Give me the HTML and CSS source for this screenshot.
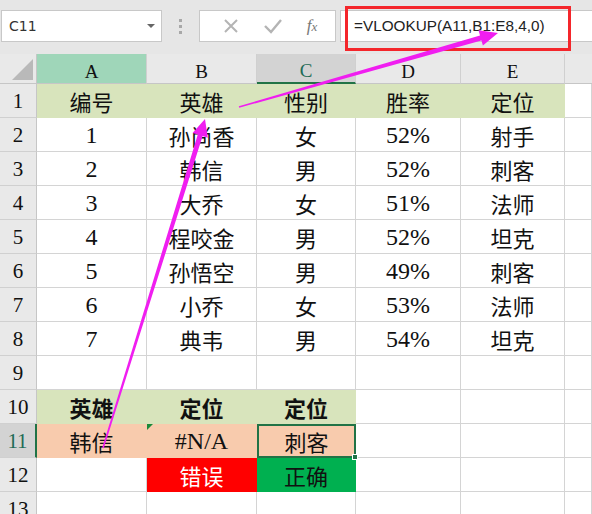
FILE: index.html
```html
<!DOCTYPE html>
<html>
<head>
<meta charset="utf-8">
<link rel="stylesheet" href="styles.css">
</head>
<body>
<div class="toolbar">
  <div class="namebox"><span class="ref">C11</span><span class="caret"></span></div>
  <div class="sep"><i></i><i></i><i></i></div>
  <div class="fbtns">
    <svg class="ico" width="18" height="18" viewBox="0 0 18 18"><path d="M3 3 L15 15 M15 3 L3 15" stroke="#b4b4b4" stroke-width="2" fill="none"/></svg>
    <svg class="ico" width="20" height="18" viewBox="0 0 20 18"><path d="M2 9 L8 15 L18 3" stroke="#b4b4b4" stroke-width="2.4" fill="none"/></svg>
    <span class="fx"><i>f</i><i class="x">x</i></span>
  </div>
  <div class="formula">=VLOOKUP(A11,B1:E8,4,0)</div>
</div>
<div class="sheet">
  <div class="corner"><span class="tri"></span></div>
  <div class="ch sel-a">A</div><div class="ch">B</div><div class="ch sel-c">C</div><div class="ch">D</div><div class="ch">E</div><div class="ch last"></div>

  <div class="rh">1</div><div class="c g">编号</div><div class="c g">英雄</div><div class="c g">性别</div><div class="c g">胜率</div><div class="c g">定位</div><div class="c"></div>
  <div class="rh">2</div><div class="c n">1</div><div class="c">孙尚香</div><div class="c">女</div><div class="c n">52%</div><div class="c">射手</div><div class="c"></div>
  <div class="rh">3</div><div class="c n">2</div><div class="c">韩信</div><div class="c">男</div><div class="c n">52%</div><div class="c">刺客</div><div class="c"></div>
  <div class="rh">4</div><div class="c n">3</div><div class="c">大乔</div><div class="c">女</div><div class="c n">51%</div><div class="c">法师</div><div class="c"></div>
  <div class="rh">5</div><div class="c n">4</div><div class="c">程咬金</div><div class="c">男</div><div class="c n">52%</div><div class="c">坦克</div><div class="c"></div>
  <div class="rh">6</div><div class="c n">5</div><div class="c">孙悟空</div><div class="c">男</div><div class="c n">49%</div><div class="c">刺客</div><div class="c"></div>
  <div class="rh">7</div><div class="c n">6</div><div class="c">小乔</div><div class="c">女</div><div class="c n">53%</div><div class="c">法师</div><div class="c"></div>
  <div class="rh">8</div><div class="c n">7</div><div class="c">典韦</div><div class="c">男</div><div class="c n">54%</div><div class="c">坦克</div><div class="c"></div>
  <div class="rh">9</div><div class="c"></div><div class="c"></div><div class="c"></div><div class="c"></div><div class="c"></div><div class="c"></div>
  <div class="rh">10</div><div class="c g b">英雄</div><div class="c g b">定位</div><div class="c g b">定位</div><div class="c"></div><div class="c"></div><div class="c"></div>
  <div class="rh sel-r">11</div><div class="c o">韩信</div><div class="c o err n">#N/A<span class="flag"></span></div><div class="c o active">刺客<span class="handle"></span></div><div class="c"></div><div class="c"></div><div class="c"></div>
  <div class="rh">12</div><div class="c"></div><div class="c red">错误</div><div class="c grn">正确</div><div class="c"></div><div class="c"></div><div class="c"></div>
  <div class="rh">13</div><div class="c"></div><div class="c"></div><div class="c"></div><div class="c"></div><div class="c"></div><div class="c"></div>
</div>
<div class="redbox"></div>
<svg class="arrows" width="592" height="514" viewBox="0 0 592 514">
  <polygon fill="#f01ef0" points="103.8,448.2 202.6,136.0 207.8,137.7 205,119 192.6,132.9 197.8,134.6 102.2,447.8"/>
  <polygon fill="#f01ef0" points="239.2,107.8 481.4,40.4 482.9,45.6 498,33 478.5,30.3 480.0,35.5 238.8,106.2"/>
</svg>
</body>
</html>
```
FILE: styles.css
```css
* { box-sizing: border-box; }
html, body { margin: 0; padding: 0; }
body {
  width: 592px;
  height: 514px;
  overflow: hidden;
  background: #e6e6e6;
  position: relative;
  font-family: "Liberation Serif", "Noto Sans CJK SC", serif;
}
.toolbar {
  height: 54px;
  display: flex;
  align-items: flex-start;
  padding-top: 10px;
  padding-left: 1px;
  background: #e6e6e6;
}
.namebox {
  width: 161px;
  height: 32px;
  background: #fff;
  border: 1px solid #c8c8c8;
  display: flex;
  align-items: center;
  justify-content: space-between;
  padding: 0 6px 0 7px;
}
.ref {
  font-family: "DejaVu Sans", "Liberation Sans", sans-serif;
  font-size: 14px;
  color: #333;
}
.caret {
  width: 0; height: 0;
  border-left: 4px solid transparent;
  border-right: 4px solid transparent;
  border-top: 4px solid #666;
}
.sep {
  width: 37px;
  height: 32px;
  display: flex;
  flex-direction: column;
  align-items: center;
  justify-content: center;
  gap: 3px;
}
.sep i { display: block; width: 3px; height: 3px; background: #a8a8a8; }
.fbtns {
  width: 137px;
  height: 32px;
  background: #fff;
  border: 1px solid #c8c8c8;
  display: flex;
  align-items: center;
  justify-content: space-around;
  padding: 0 6px 0 10px;
}
.fx {
  font-family: "Liberation Serif", serif;
  font-style: italic;
  color: #777;
  font-size: 17px;
}
.fx i { font-style: italic; }
.fx .x { font-size: 13px; }
.formula {
  margin-left: 4px;
  flex: 1;
  height: 32px;
  background: #fff;
  border: 1px solid #c8c8c8;
  border-right: none;
  font-family: "Liberation Sans", sans-serif;
  font-size: 15.3px;
  color: #222;
  padding-left: 13px;
  line-height: 30px;
}
.sheet {
  display: grid;
  grid-template-columns: 37px 110px 110px 99px 105px 104px 27px;
  grid-template-rows: 30px repeat(13, 34px);
  background: #fff;
}
.corner {
  background: #e9e9e9;
  border-right: 1px solid #c6c6c6;
  border-bottom: 1px solid #c6c6c6;
  position: relative;
}
.tri {
  position: absolute;
  right: 3px; bottom: 3px;
  width: 0; height: 0;
  border-left: 21px solid transparent;
  border-bottom: 21px solid #b9b9b9;
}
.ch {
  background: #e9e9e9;
  border-right: 1px solid #d0d0d0;
  border-bottom: 1px solid #c6c6c6;
  font-size: 19px;
  color: #111;
  display: flex;
  align-items: flex-end;
  justify-content: center;
  padding-bottom: 2px;
  line-height: 1;
}
.ch.last { border-right: none; }
.ch.sel-a { background: #9fd6b9; }
.ch.sel-c { background: #d3d3d3; border-bottom: 2px solid #217346; color: #1e6b56; }
.rh {
  background: #e9e9e9;
  border-right: 1px solid #c6c6c6;
  border-bottom: 1px solid #d0d0d0;
  font-size: 21px;
  color: #111;
  display: flex;
  align-items: center;
  justify-content: center;
  padding-top: 2px;
}
.rh.sel-r { background: #d3d3d3; border-right: 2px solid #217346; color: #1e6b56; }
.c {
  border-right: 1px solid #d4d4d4;
  border-bottom: 1px solid #d4d4d4;
  font-size: 22px;
  color: #111;
  display: flex;
  align-items: center;
  justify-content: center;
  position: relative;
  white-space: nowrap;
}
.c.n { font-size: 24px; padding-top: 2px; }
.c.g { background: #d8e4bc; border-right-color: #d8e4bc; border-bottom-color: #d8e4bc; }
.c.b { font-weight: bold; }
.c.o { background: #f8cbad; border-right-color: #f8cbad; border-bottom-color: #f8cbad; }
.c.red { background: #ff0000; color: #fff; border-color: #ff0000; }
.c.grn { background: #00b050; color: #111; border-color: #00b050; }
.c.active { border: 2px solid #217346; z-index: 2; }
.handle {
  position: absolute;
  right: -4px; bottom: -4px;
  width: 6px; height: 6px;
  background: #217346;
  border: 1px solid #fff;
  z-index: 3;
}
.flag {
  position: absolute;
  left: 0; top: 0;
  width: 0; height: 0;
  border-top: 6px solid #1a8a3a;
  border-right: 6px solid transparent;
}
.redbox {
  position: absolute;
  left: 345px; top: 6px;
  width: 226px; height: 45px;
  border: 3px solid #f4262b;
}
.arrows {
  position: absolute;
  left: 0; top: 0;
  pointer-events: none;
}
```
